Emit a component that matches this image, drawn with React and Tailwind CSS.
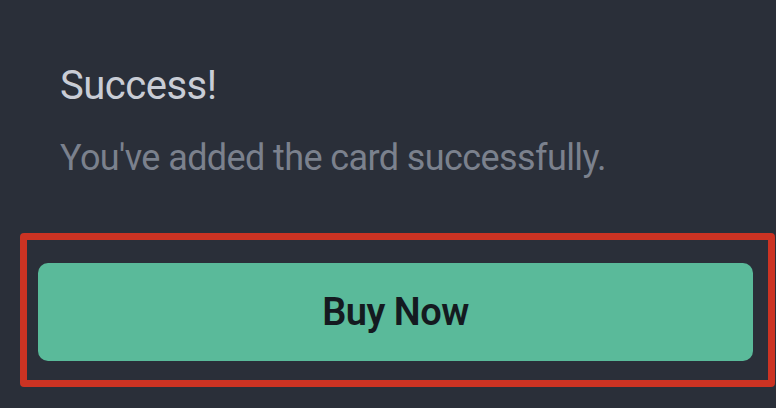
export default function App() {
  return (
    <div className="w-[776px] h-[408px] bg-[#2a2f39] overflow-hidden font-['Roboto',sans-serif]">
      <div className="pl-[60px] pt-[64px]">
        <h1 className="text-[40px] leading-[44px] text-[#c9cdd6] tracking-[-0.5px]">Success!</h1>
        <p className="mt-[30px] text-[36px] leading-[40px] text-[#7b818d] tracking-[-0.6px]">You've added the card successfully.</p>
      </div>
      <div className="ml-[20px] mt-[55px] w-[755px] h-[154px] border-[7px] border-[#cc3323] rounded-[4px] pl-[11px] pt-[23px] pr-[15px]">
        <button className="w-full h-[98px] rounded-[10px] bg-[#5aba9a] text-[#141a20] text-[38px] font-semibold tracking-[-0.5px]">
          Buy Now
        </button>
      </div>
    </div>
  );
}
